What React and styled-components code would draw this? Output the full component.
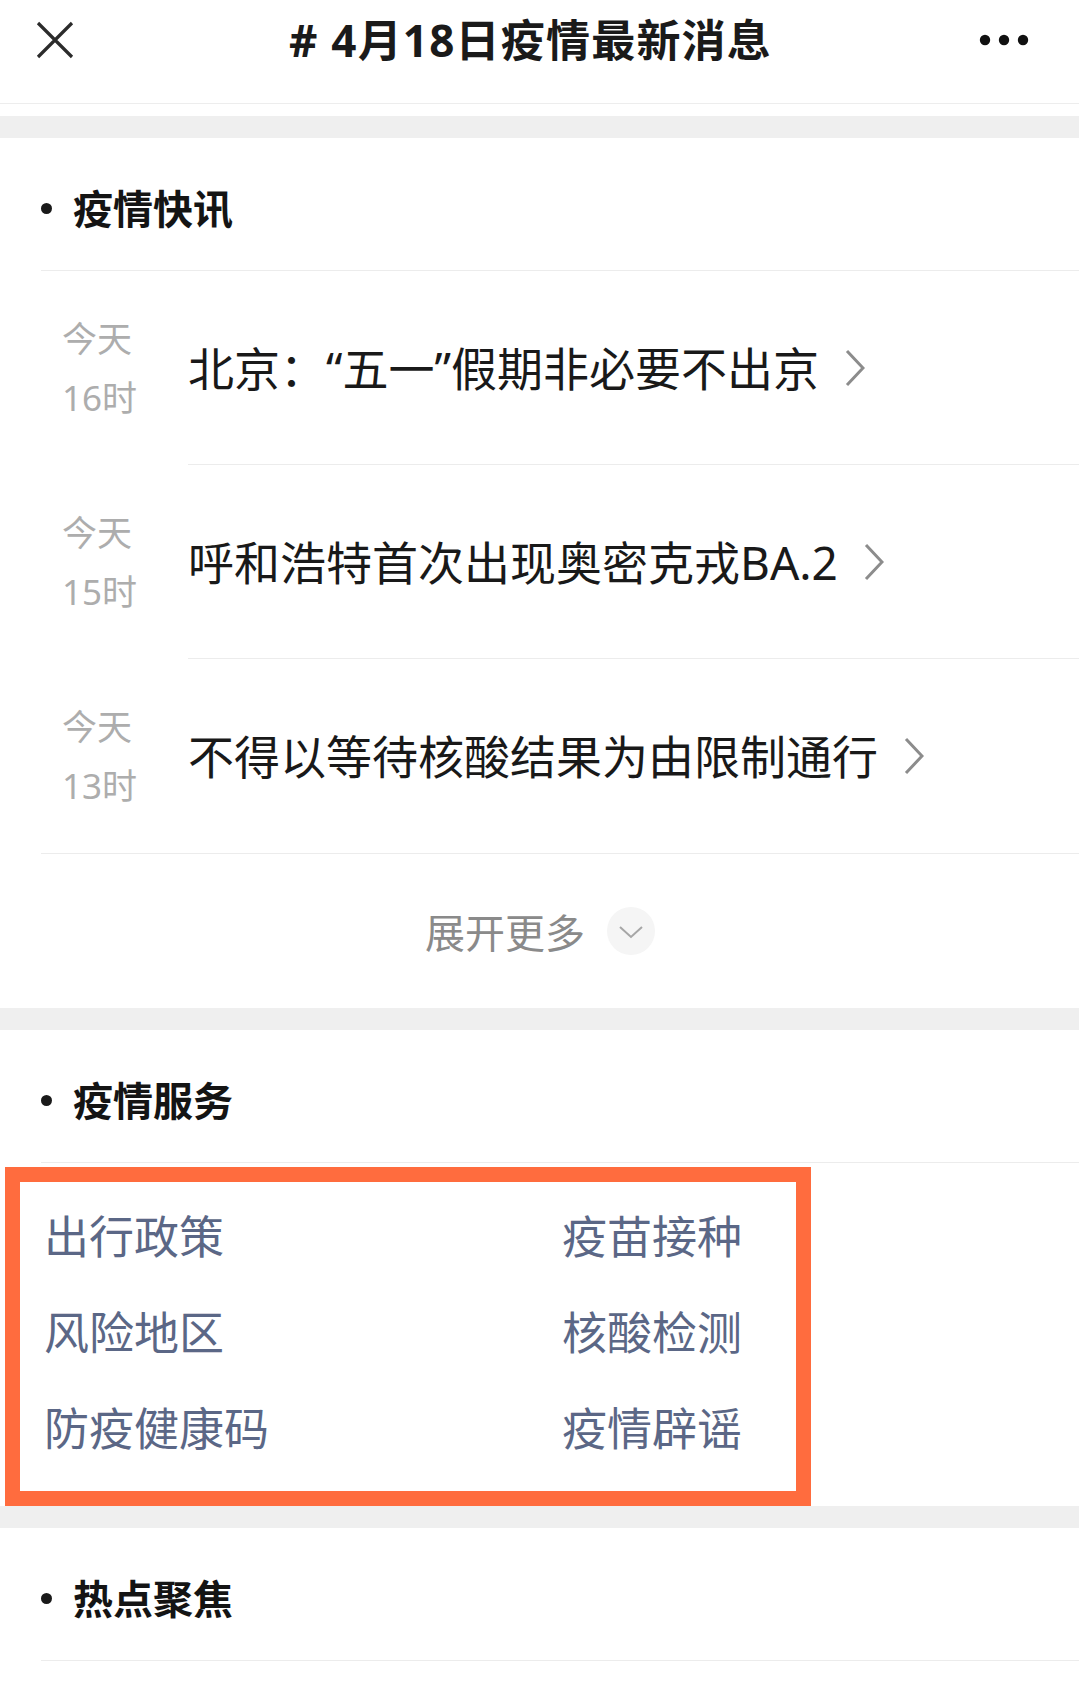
import React from "react";
import styled, { createGlobalStyle } from "styled-components";

// News items shown under the first section
const news = [
  { day: "今天", hour: "16时", title: "北京：“五一”假期非必要不出京" },
  { day: "今天", hour: "15时", title: "呼和浩特首次出现奥密克戎BA.2" },
  { day: "今天", hour: "13时", title: "不得以等待核酸结果为由限制通行" },
];

const services = [
  "出行政策",
  "疫苗接种",
  "风险地区",
  "核酸检测",
  "防疫健康码",
  "疫情辟谣",
];

const GlobalStyle = createGlobalStyle`
  html, body {
    margin: 0;
    padding: 0;
    background: #fff;
  }
  body {
    font-family: "Noto Sans", "Noto Sans CJK SC", sans-serif;
    color: #191919;
  }
  * {
    box-sizing: border-box;
  }
`;

const CloseIcon = () => (
  <svg width="38" height="38" viewBox="0 0 38 38">
    <path d="M2 2L36 36M36 2L2 36" stroke="#2b2b2b" strokeWidth="3.2" />
  </svg>
);

const MoreIcon = () => (
  <svg width="50" height="12" viewBox="0 0 50 12">
    <circle cx="6" cy="6" r="5.2" fill="#111" />
    <circle cx="25" cy="6" r="5.2" fill="#111" />
    <circle cx="44" cy="6" r="5.2" fill="#111" />
  </svg>
);

const ChevronRight = () => (
  <svg width="20" height="38" viewBox="0 0 20 38">
    <polyline
      points="2,2 18,19 2,36"
      fill="none"
      stroke="#8c8c8c"
      strokeWidth="3"
    />
  </svg>
);

const ChevronDown = () => (
  <svg width="24" height="13" viewBox="0 0 24 13">
    <polyline
      points="1,1 12,11 23,1"
      fill="none"
      stroke="#a6a6a6"
      strokeWidth="2"
    />
  </svg>
);

const App = () => {
  return (
    <Page>
      <GlobalStyle />
      <TopBar>
        <IconSlot>
          <CloseIcon />
        </IconSlot>
        <PageTitle># 4月18日疫情最新消息</PageTitle>
        <IconSlot $right>
          <MoreIcon />
        </IconSlot>
      </TopBar>

      <Band $gap={12} />
      <SectionHeader>
        <Bullet />
        <SectionTitle>疫情快讯</SectionTitle>
      </SectionHeader>
      <NewsList>
        {news.map((item) => (
          <NewsRow key={item.title}>
            <TimeCol>
              <span>{item.day}</span>
              <span>{item.hour}</span>
            </TimeCol>
            <NewsBody>
              <NewsTitle>{item.title}</NewsTitle>
              <ChevronRight />
            </NewsBody>
          </NewsRow>
        ))}
        <ExpandRow>
          <ExpandText>展开更多</ExpandText>
          <ExpandCircle>
            <ChevronDown />
          </ExpandCircle>
        </ExpandRow>
      </NewsList>

      <Band />
      <SectionHeader>
        <Bullet />
        <SectionTitle>疫情服务</SectionTitle>
      </SectionHeader>
      <ServiceGrid>
        {services.map((name) => (
          <ServiceLink key={name}>{name}</ServiceLink>
        ))}
      </ServiceGrid>

      <Band />
      <SectionHeader>
        <Bullet />
        <SectionTitle>热点聚焦</SectionTitle>
      </SectionHeader>
    </Page>
  );
};

const Page = styled.div`
  width: 1079px;
  min-height: 1687px;
  background: #fff;
  overflow: hidden;
`;

const TopBar = styled.div`
  height: 104px;
  padding: 0 50px 24px 36px;
  display: flex;
  align-items: center;
  justify-content: space-between;
  border-bottom: 1px solid #ededed;
`;

const IconSlot = styled.div`
  width: 80px;
  display: flex;
  justify-content: ${(props) => (props.$right ? "flex-end" : "flex-start")};
`;

const PageTitle = styled.h1`
  margin: 0 0 0 -4px;
  font-size: 44px;
  font-weight: 700;
  letter-spacing: 1.2px;
  color: #1a1a1a;
  line-height: 1;
`;

const Band = styled.div`
  height: 22px;
  margin-top: ${(props) => props.$gap || 0}px;
  background: #efefef;
`;

const SectionHeader = styled.div`
  height: 133px;
  margin-left: 41px;
  padding-top: 9px;
  display: flex;
  align-items: center;
  gap: 21px;
  border-bottom: 1px solid #ececec;
`;

const Bullet = styled.span`
  width: 11px;
  height: 11px;
  border-radius: 50%;
  background: #1a1a1a;
`;

const SectionTitle = styled.h2`
  margin: 0;
  font-size: 40px;
  font-weight: 700;
  color: #141414;
  line-height: 1;
`;

const NewsList = styled.div`
  margin-left: 41px;
`;

const NewsRow = styled.div`
  display: flex;
`;

const TimeCol = styled.div`
  width: 147px;
  padding-left: 21px;
  display: flex;
  flex-direction: column;
  justify-content: center;
  font-size: 35px;
  line-height: 59px;
  color: #adadad;
`;

const NewsBody = styled.div`
  flex: 1;
  height: 194px;
  display: flex;
  align-items: center;
  gap: 26px;
  ${NewsRow}:not(:nth-last-child(2)) & {
    border-bottom: 1px solid #ececec;
  }
`;

const NewsTitle = styled.span`
  font-size: 46px;
  color: #191919;
  line-height: 1;
`;

const ExpandRow = styled.div`
  height: 155px;
  display: flex;
  align-items: center;
  justify-content: center;
  gap: 22px;
  border-top: 1px solid #ececec;
  padding-right: 40px;
`;

const ExpandText = styled.span`
  font-size: 40px;
  color: #8a8a8a;
`;

const ExpandCircle = styled.span`
  width: 48px;
  height: 48px;
  border-radius: 50%;
  background: #f5f5f5;
  display: flex;
  align-items: center;
  justify-content: center;
  padding-top: 2px;
`;

const ServiceGrid = styled.div`
  width: 806px;
  height: 339px;
  margin: 4px 0 0 5px;
  border: 15px solid #ff6c3e;
  padding: 7px 0 14px 24px;
  display: grid;
  grid-template-columns: 518px 1fr;
  grid-auto-rows: 96px;
`;

const ServiceLink = styled.span`
  font-size: 45px;
  line-height: 96px;
  color: #5b6786;
`;

export default App;
